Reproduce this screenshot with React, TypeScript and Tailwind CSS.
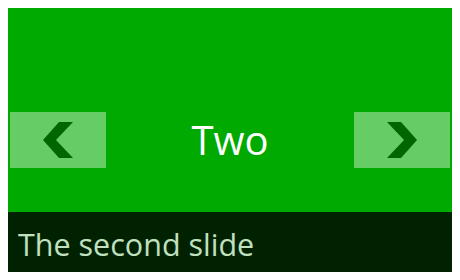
const Chevron = ({ flip }: { flip?: boolean }) => (
  <svg width="96" height="56" viewBox="0 0 96 56" className={flip ? "-scale-x-100" : ""}>
    <polygon points="49,10 63,10 46,28 63,46 49,46 33,28" fill="#006600" />
  </svg>
);

export default function App() {
  return (
    <div className="p-2 bg-white" style={{ fontFamily: '"Open Sans", "Noto Sans", sans-serif' }}>
      <div className="relative w-[444px] h-[264px] bg-[#00aa00] overflow-hidden">
        <div className="h-full flex items-center justify-center text-white text-[40px] leading-none">
          Two
        </div>

        <button className="absolute left-[2px] top-[104px] w-24 h-14 bg-white/40 flex items-center justify-center">
          <Chevron />
        </button>
        <button className="absolute right-[2px] top-[104px] w-24 h-14 bg-white/40 flex items-center justify-center">
          <Chevron flip />
        </button>

        <div className="absolute bottom-0 left-0 right-0 h-[60px] bg-[#002200] flex items-center px-[10px] pt-1">
          <span className="text-[30.5px] leading-none text-[#c0e0c0]">The second slide</span>
        </div>
      </div>
    </div>
  );
}
